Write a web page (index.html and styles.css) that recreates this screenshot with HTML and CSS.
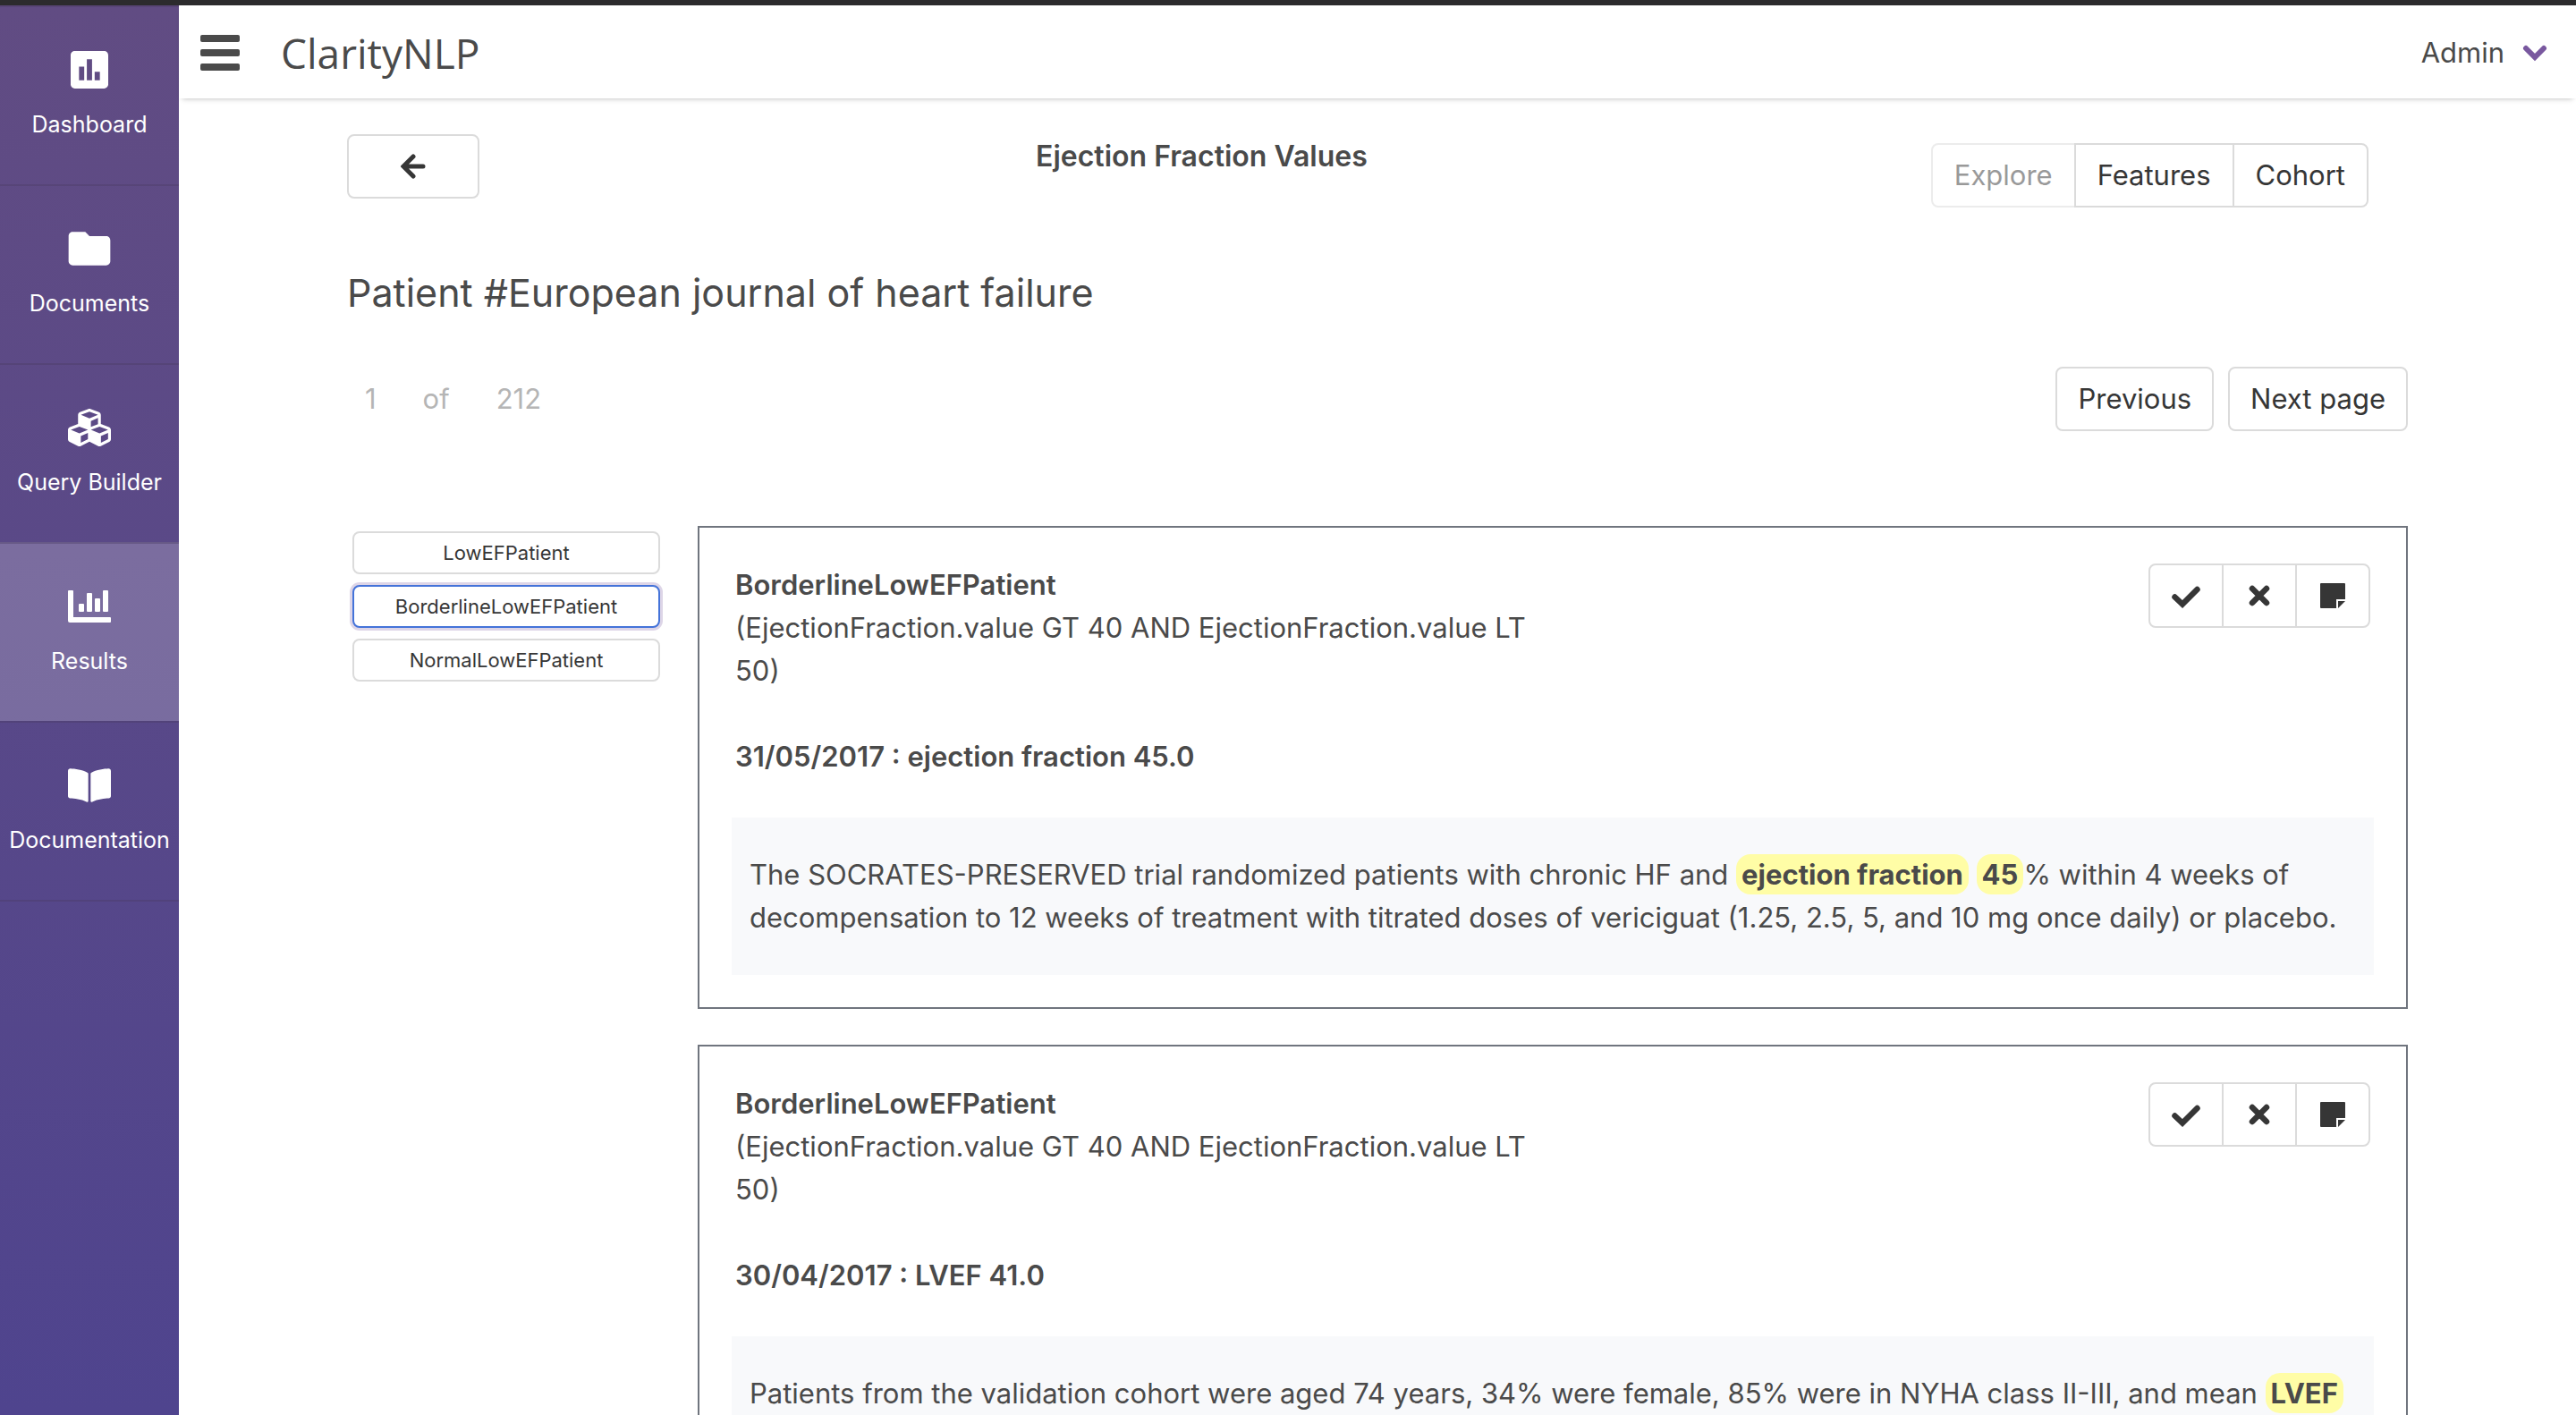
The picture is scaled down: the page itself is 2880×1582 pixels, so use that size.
FILE: index.html
```html
<!DOCTYPE html>
<html lang="en">
<head>
<meta charset="utf-8">
<title>ClarityNLP</title>
<link rel="stylesheet" href="styles.css">
</head>
<body>
<svg class="sprite" aria-hidden="true">
  <symbol id="i-check" viewBox="0 0 36 28"><path d="M5.500 15.500L14 23.500L30.500 7" fill="none" stroke="currentColor" stroke-width="6.500" stroke-linecap="round"/></symbol>
  <symbol id="i-cross" viewBox="0 0 36 28"><path d="M10 6L26 22M26 6L10 22" fill="none" stroke="currentColor" stroke-width="6.500" stroke-linecap="round"/></symbol>
  <symbol id="i-note" viewBox="0 0 36 28"><path d="M5 0h26a1 1 0 0 1 1 1v17h-10v10H5a1 1 0 0 1-1-1V1a1 1 0 0 1 1-1zM24 20h8l-8 8z" fill="currentColor"/></symbol>
</svg>
<div class="app">
  <nav class="sidebar">
    <a class="nav-item" href="#dashboard">
      <svg class="nav-icon" viewBox="0 0 24 24"><path d="M19 3H5c-1.100 0-2 .9-2 2v14c0 1.100.9 2 2 2h14c1.100 0 2-.9 2-2V5c0-1.100-.9-2-2-2zM9.500 17H7v-6.500h2.500zm3.750 0h-2.500V7h2.500zM17 17h-2.500v-4H17z"/></svg>
      <span>Dashboard</span>
    </a>
    <a class="nav-item" href="#documents">
      <svg class="nav-icon" viewBox="0 0 24 24"><path d="M10 4H4c-1.100 0-1.990.9-1.990 2L2 18c0 1.100.9 2 2 2h16c1.100 0 2-.9 2-2V8c0-1.100-.9-2-2-2h-8l-2-2z"/></svg>
      <span>Documents</span>
    </a>
    <a class="nav-item" href="#query-builder">
      <svg class="nav-icon nav-icon-fa" viewBox="0 0 512 512"><path d="M488.600 250.200L392 214V105.500c0-15-9.300-28.400-23.400-33.700l-100-37.500c-8.100-3.100-17.100-3.100-25.300 0l-100 37.500c-14.100 5.300-23.400 18.700-23.400 33.700V214l-96.600 36.200C9.300 255.500 0 268.900 0 283.900V394c0 13.600 7.700 26.100 19.900 32.200l100 50c10.100 5.100 22.100 5.100 32.200 0l103.900-52 103.900 52c10.100 5.100 22.100 5.100 32.200 0l100-50c12.200-6.100 19.900-18.600 19.900-32.200V283.900c0-15-9.300-28.400-23.400-33.700zM358 214.800l-85 31.900v-68.200l85-37v73.300zM154 104.100l102-38.200 102 38.200v.6l-102 41.400-102-41.400v-.6zm84 291.100l-85 42.500v-79.100l85-38.800v75.400zm0-112l-102 41.400-102-41.400v-.6l102-38.200 102 38.200v.6zm240 112l-85 42.500v-79.100l85-38.800v75.400zm0-112l-102 41.400-102-41.400v-.6l102-38.200 102 38.200v.6z"/></svg>
      <span>Query Builder</span>
    </a>
    <a class="nav-item is-active" href="#results">
      <svg class="nav-icon nav-icon-fa" viewBox="0 0 48 48"><path d="M1 6h4a1 1 0 0 1 1 1v29h41a1 1 0 0 1 1 1v4a1 1 0 0 1-1 1H2a2 2 0 0 1-2-2V7a1 1 0 0 1 1-1z"/><rect x="12" y="21" width="6" height="9" rx="1"/><rect x="21" y="9" width="6" height="21" rx="1"/><rect x="30" y="15" width="6" height="15" rx="1"/><rect x="39" y="6" width="6" height="24" rx="1"/></svg>
      <span>Results</span>
    </a>
    <a class="nav-item" href="#documentation">
      <svg class="nav-icon nav-icon-fa" viewBox="0 0 576 512"><path d="M542.220 32.050c-54.800 3.110-163.720 14.430-230.960 55.590-4.640 2.840-7.270 7.890-7.270 13.170v363.870c0 11.550 12.630 18.850 23.280 13.490 69.180-34.820 169.230-44.320 218.700-46.920 16.890-.89 30.020-14.430 30.020-30.660V62.750c.01-17.710-15.350-31.740-33.770-30.700zM264.730 87.640C197.500 46.480 88.580 35.170 33.780 32.050 15.360 31.010 0 45.040 0 62.750V400.600c0 16.240 13.130 29.780 30.020 30.660 49.490 2.600 149.590 12.110 218.770 46.950 10.620 5.350 23.210-1.940 23.210-13.460V100.630c0-5.290-2.620-10.140-7.270-12.990z"/></svg>
      <span>Documentation</span>
    </a>
  </nav>

  <div class="page">
    <header class="topbar">
      <button class="menu-toggle" type="button" aria-label="Toggle menu">
        <svg viewBox="0 0 44 40"><rect y="0" width="44" height="8" rx="2"/><rect y="16" width="44" height="8" rx="2"/><rect y="32" width="44" height="8" rx="2"/></svg>
      </button>
      <a class="brand" href="#home">ClarityNLP</a>
      <button class="account" type="button">Admin
        <svg viewBox="0 0 28 20"><path d="M4 5L14 15L24 5" fill="none" stroke="currentColor" stroke-width="6" stroke-linecap="round"/></svg>
      </button>
    </header>

    <main class="content">
      <div class="result-head">
        <button class="button back" type="button" aria-label="Back">
          <svg viewBox="0 0 28 28"><path d="M14 3L3 14L14 25M4 14H25" fill="none" stroke="currentColor" stroke-width="5" stroke-linecap="round"/></svg>
        </button>
        <h1 class="result-title">Ejection Fraction Values</h1>
        <div class="button-group tabs">
          <button class="button" type="button" disabled>Explore</button>
          <button class="button" type="button">Features</button>
          <button class="button" type="button">Cohort</button>
        </div>
      </div>

      <h2 class="patient">Patient #European journal of heart failure</h2>

      <div class="pager">
        <p class="pager-count"><span>1</span><span>of</span><span>212</span></p>
        <div class="pager-actions">
          <button class="button" type="button">Previous</button>
          <button class="button" type="button">Next page</button>
        </div>
      </div>

      <div class="results">
        <div class="filters">
          <button class="button filter" type="button">LowEFPatient</button>
          <button class="button filter is-focused" type="button">BorderlineLowEFPatient</button>
          <button class="button filter" type="button">NormalLowEFPatient</button>
        </div>

        <div class="cards">
          <article class="card">
            <div class="card-head">
              <div class="card-rule">
                <h3>BorderlineLowEFPatient</h3>
                <p>(EjectionFraction.value GT 40 AND EjectionFraction.value LT 50)</p>
              </div>
              <div class="button-group">
                <button class="button icon-button" type="button" aria-label="Correct"><svg><use href="#i-check"/></svg></button>
                <button class="button icon-button" type="button" aria-label="Incorrect"><svg><use href="#i-cross"/></svg></button>
                <button class="button icon-button" type="button" aria-label="Comment"><svg><use href="#i-note"/></svg></button>
              </div>
            </div>
            <h4 class="card-date">31/05/2017 : ejection fraction 45.0</h4>
            <p class="excerpt">The SOCRATES-PRESERVED trial randomized patients with chronic HF and <mark>ejection fraction</mark> <mark>45</mark>% within 4 weeks of decompensation to 12 weeks of treatment with titrated doses of vericiguat (1.25, 2.5, 5, and 10 mg once daily) or placebo.</p>
          </article>

          <article class="card">
            <div class="card-head">
              <div class="card-rule">
                <h3>BorderlineLowEFPatient</h3>
                <p>(EjectionFraction.value GT 40 AND EjectionFraction.value LT 50)</p>
              </div>
              <div class="button-group">
                <button class="button icon-button" type="button" aria-label="Correct"><svg><use href="#i-check"/></svg></button>
                <button class="button icon-button" type="button" aria-label="Incorrect"><svg><use href="#i-cross"/></svg></button>
                <button class="button icon-button" type="button" aria-label="Comment"><svg><use href="#i-note"/></svg></button>
              </div>
            </div>
            <h4 class="card-date">30/04/2017 : LVEF 41.0</h4>
            <p class="excerpt">Patients from the validation cohort were aged 74 years, 34% were female, 85% were in NYHA class II-III, and mean <mark>LVEF</mark></p>
          </article>
        </div>
      </div>
    </main>
  </div>
</div>
</body>
</html>
```
FILE: styles.css
```css
* {
  box-sizing: border-box;
}

body {
  margin: 0;
  background: #fff;
  color: #4a4a4a;
  font-family: Inter, "Liberation Sans", sans-serif;
  font-size: 31px;
  line-height: 48px;
}

h1, h2, h3, h4, p {
  margin: 0;
  font-size: inherit;
}

a {
  color: inherit;
  text-decoration: none;
}

button {
  font: inherit;
  color: inherit;
  background: none;
  border: 0;
  padding: 0;
  cursor: pointer;
}

svg {
  fill: currentColor;
}

.sprite {
  display: none;
}

.app {
  display: flex;
  height: 100vh;
  overflow: hidden;
  border-top: 6px solid #2c2b2d;
}

/* Sidebar */
.sidebar {
  flex: 0 0 200px;
  background: linear-gradient(#614c83, #4f448e);
  color: #fff;
  font-size: 25px;
  line-height: 32px;
}

.nav-item {
  display: flex;
  flex-direction: column;
  align-items: center;
  height: 200px;
  padding-top: 42px;
  gap: 17px;
  border-top: 2px solid rgba(74, 60, 100, 0.4);
}

.nav-item:last-child {
  height: 202px;
  border-bottom: 2px solid rgba(74, 60, 100, 0.4);
}

.nav-item.is-active {
  background: rgba(255, 255, 255, 0.2);
}

.nav-icon {
  width: 56px;
  height: 56px;
}

.nav-icon-fa {
  padding: 4px;
}

/* Top bar */
.page {
  flex: 1;
  min-width: 0;
}

.topbar {
  display: flex;
  align-items: center;
  height: 104px;
  padding: 2px 32px 0 24px;
  box-shadow: 0 4px 6px -4px rgba(0, 0, 0, 0.3);
}

.menu-toggle svg {
  display: block;
  width: 44px;
  height: 40px;
}

.brand {
  margin-left: 46px;
  font-family: "Open Sans", sans-serif;
  font-size: 46px;
}

.account {
  display: flex;
  align-items: center;
  gap: 20px;
  margin-left: auto;
}

.account svg {
  width: 28px;
  height: 20px;
  color: #79589f;
}

/* Buttons */
.button {
  height: 72px;
  padding: 0 24px;
  border: 2px solid #dbdbdb;
  border-radius: 8px;
  background: #fff;
  color: #363636;
  white-space: nowrap;
}

.button:disabled {
  opacity: 0.5;
}

.button svg {
  display: block;
  margin: 0 auto;
}

.button-group {
  display: flex;
}

.button-group .button {
  border-radius: 0;
}

.button-group .button + .button {
  margin-left: -2px;
}

.button-group .button:first-child {
  border-radius: 8px 0 0 8px;
}

.button-group .button:last-child {
  border-radius: 0 8px 8px 0;
}

.icon-button svg {
  width: 36px;
  height: 28px;
}

.icon-button {
  width: 84px;
  padding: 0;
}

/* Result heading */
.content {
  padding: 40px 188px 0;
}

.result-head {
  display: flex;
  align-items: flex-start;
}

.back {
  width: 148px;
}

.back svg {
  width: 28px;
  height: 28px;
}

.result-title {
  flex: 1;
  padding-right: 8px;
  font-size: 32px;
  font-weight: 600;
  line-height: 50px;
  text-align: center;
}

.tabs {
  margin: 10px 44px 0 0;
}

.patient {
  margin-top: 68px;
  font-size: 43px;
  font-weight: 400;
  line-height: 54px;
}

.pager {
  display: flex;
  justify-content: space-between;
  align-items: center;
  margin-top: 56px;
}

.pager-count {
  display: flex;
  gap: 52px;
  padding-left: 20px;
  color: #b5b5b5;
}

.pager-actions {
  display: flex;
  gap: 16px;
}

.pager-actions .button {
  padding: 0 23px;
}

/* Results */
.results {
  display: flex;
  gap: 42px;
  margin-top: 106px;
}

.filters {
  flex: 0 0 350px;
  display: flex;
  flex-direction: column;
  gap: 12px;
  padding: 6px 0 0 6px;
}

.filter {
  height: 48px;
  font-size: 22px;
  line-height: 32px;
}

.filter.is-focused {
  border-color: #4473d9;
  box-shadow: 0 0 0 3px rgba(121, 88, 159, 0.25);
}

.cards {
  flex: 1;
  min-width: 0;
  display: flex;
  flex-direction: column;
  gap: 40px;
}

.card {
  padding: 40px 36px 36px;
  border: 2px solid #70757e;
}

.card-head {
  display: flex;
  justify-content: space-between;
  align-items: flex-start;
  padding: 0 4px;
}

.card-rule {
  width: 50%;
}

.card-rule h3,
.card-date {
  font-weight: 600;
}

.card-date {
  margin-top: 48px;
  padding: 0 4px;
}

.excerpt {
  margin-top: 44px;
  padding: 40px 20px;
  background: #f8f9fb;
}

mark {
  padding: 4px 6px;
  border-radius: 16px;
  background: #fffda6;
  color: inherit;
  font-weight: 700;
}
```
